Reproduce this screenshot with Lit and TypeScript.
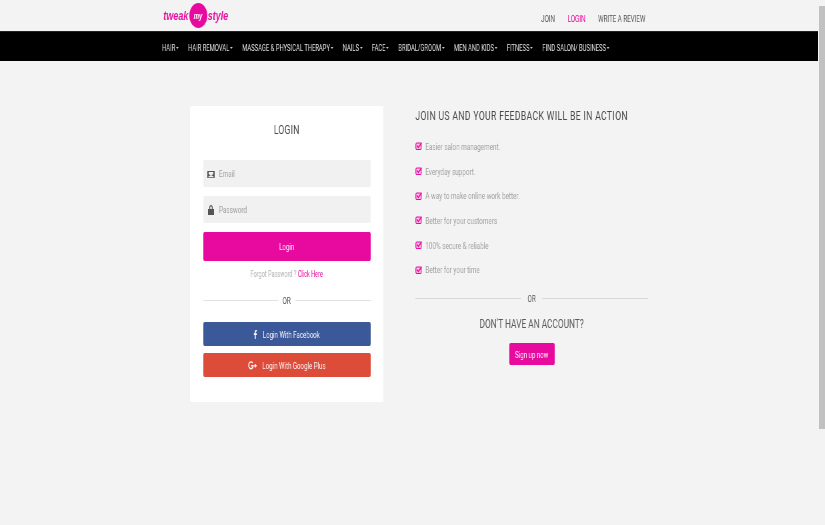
import { LitElement, html, css } from 'lit';
import { customElement } from 'lit/decorators.js';

const NAV = ['HAIR', 'HAIR REMOVAL', 'MASSAGE & PHYSICAL THERAPY', 'NAILS', 'FACE', 'BRIDAL/GROOM', 'MEN AND KIDS', 'FITNESS', 'FIND SALON/ BUSINESS'];
const PERKS = ['Easier salon management.', 'Everyday support.', 'A way to make online work better.', 'Better for your customers', '100% secure & reliable', 'Better for your time'];

// the reference is squeezed horizontally, so .page is laid out 1.5x wide and scaled back
@customElement('app-root')
export class AppRoot extends LitElement {
  static styles = css`
    :host {
      display: flex;
      width: 825px;
      height: 525px;
      overflow: hidden;
      background: #f3f3f3;
      font-family: Roboto, 'Liberation Sans', sans-serif;
      color: #555;
    }
    .frame { width: 818px; flex: none; overflow: hidden; }
    .page { width: 1227px; transform: scaleX(0.6667); transform-origin: 0 0; will-change: transform; background: #f3f3f3; height: 525px; }
    .scrollbar { flex: 1; padding: 6px 0 96px 1px; display: flex; }
    .thumb { flex: 1; background: #c1c1c1; }

    .top { height: 31px; display: flex; align-items: center; padding: 0 259px 0 245px; box-sizing: border-box; justify-content: space-between; }
    .logo { display: flex; align-items: center; gap: 1px; color: #e6109f; font-family: 'Liberation Sans', sans-serif; font-style: italic; font-weight: 700; font-size: 13.500px; height: 26px; }
    .logo .my { width: 27px; height: 25px; border-radius: 50%; background: #e8099f; color: #fff; font-size: 9px; display: flex; align-items: center; justify-content: center; }
    .toplinks { display: flex; gap: 19px; font-size: 9.300px; color: #555; padding-top: 5px; }
    .toplinks .on { color: #e8099f; }

    nav { height: 30px; background: #000; display: flex; align-items: center; padding: 2px 0 0 243px; gap: 14.200px; color: #e4e4e4; font-size: 8.800px; border-top: 1px solid #222; box-sizing: border-box; }
    nav i { display: inline-block; border: 2px solid transparent; border-top-color: #ccc; border-bottom: 0; margin-left: 1px; vertical-align: middle; }

    .body { display: flex; padding: 45px 0 0 285px; gap: 48px; align-items: flex-start; }
    .card { width: 290px; height: 296px; background: #fff; border-radius: 2px; padding: 0 19.500px; box-sizing: border-box; display: flex; flex-direction: column; }
    .card h2 { margin: 17px 0 24px; height: 13px; line-height: 13px; text-align: center; font-size: 13px; font-weight: 400; color: #4a4a4a; letter-spacing: 0.3px; }
    .field { height: 27px; margin-bottom: 9px; background: #f1f1f1; border-radius: 2px; display: flex; align-items: center; gap: 7px; padding-left: 6px; font-size: 9.500px; color: #a0a0a0; }
    .field svg { width: 11px; height: 10px; flex: none; }
    .btn { border-radius: 2px; color: #fbf6f9; display: flex; align-items: center; justify-content: center; font-size: 9.200px; }
    .login { height: 28.500px; background: #e8099f; }
    .forgot { margin-top: 9.500px; height: 9px; line-height: 9px; text-align: center; font-size: 8.300px; color: #b0b0b0; }
    .forgot span { color: #e8099f; }
    .or { display: flex; align-items: center; gap: 7px; font-size: 9.500px; color: #555; height: 10px; }
    .or::before, .or::after { content: ''; flex: 1; border-top: 1px solid #e2e2e2; }
    .card .or { margin-top: 16px; }
    .fb { height: 24px; margin-top: 17px; background: #3b5998; gap: 8px; }
    .gp { height: 24px; margin-top: 7px; background: #dd4b39; gap: 8px; }
    .btn svg { height: 9px; flex: none; }

    .side { width: 349px; }
    .side h1 { margin: 3px 0 0; height: 13px; line-height: 13px; font-size: 13px; font-weight: 400; letter-spacing: 0.5px; color: #4a4a4a; white-space: nowrap; }
    ul { list-style: none; margin: 12px 0 0; padding: 0; }
    li { height: 24.700px; display: flex; align-items: center; gap: 5px; font-size: 9.500px; color: #a0a0a0; }
    li svg { width: 10px; height: 8px; flex: none; }
    .side .or { margin-top: 11px; gap: 9px; }
    .side .or::before, .side .or::after { border-top-color: #d8d8d8; }
    .side h3 { margin: 15px 0 0; height: 12px; line-height: 12px; text-align: center; font-size: 12.500px; font-weight: 400; color: #5a5a5a; }
    .signup { width: 68px; height: 22px; margin: 13px auto 0; background: #e8099f; }
  `;

  render() {
    return html`
      <div class="frame">
        <div class="page">
          <header class="top">
            <div class="logo"><span>tweak</span><span class="my">my</span><span>style</span></div>
            <div class="toplinks"><span>JOIN</span><span class="on">LOGIN</span><span>WRITE A REVIEW</span></div>
          </header>
          <nav>${NAV.map((n) => html`<span>${n}<i></i></span>`)}</nav>
          <main class="body">
            <section class="card">
              <h2>LOGIN</h2>
              <div class="field">
                <svg viewBox="0 0 11 10" preserveAspectRatio="none"><path fill="#555" d="M0 2h11v7H0z"/><path fill="#f1f1f1" d="M2 3h7v2L5.500 6.500 2 5zM1 8l3-1.500h3L10 8v.3H1z"/></svg>
                Email
              </div>
              <div class="field">
                <svg viewBox="0 0 11 10" preserveAspectRatio="none"><path fill="#555" d="M1 4h9v6H1zM3 4V2.500a2.500 2.500 0 0 1 5 0V4H6.700V2.500a1.200 1.200 0 0 0-2.400 0V4z"/></svg>
                Password
              </div>
              <div class="btn login">Login</div>
              <div class="forgot">Forgot Password ? <span>Click Here</span></div>
              <div class="or">OR</div>
              <div class="btn fb">
                <svg viewBox="0 0 5 10" width="6"><path fill="#fff" d="M1.500 10V5.500H0V3.700h1.500V2.300C1.500.800 2.400 0 3.700 0H5v1.700H4c-.6 0-.8.300-.8.800v1.200H5l-.2 1.800H3.200V10z"/></svg>
                Login With Facebook
              </div>
              <div class="btn gp">
                <svg viewBox="0 0 14 10" width="14"><path fill="none" stroke="#fff" stroke-width="1.600" d="M7 2.200A3.800 3.800 0 1 0 8 5.200H4.500M11.500 3.200v4M9.500 5.200h4"/></svg>
                Login With Google Plus
              </div>
            </section>
            <section class="side">
              <h1>JOIN US AND YOUR FEEDBACK WILL BE IN ACTION</h1>
              <ul>
                ${PERKS.map((p) => html`<li>
                  <svg viewBox="0 0 10 8"><rect x=".8" y="1" width="8" height="6.500" rx="1.500" fill="#fbc4e6" stroke="#e8099f" stroke-width="1.200"/><path fill="none" stroke="#e8099f" stroke-width="1.500" d="M2.500 3.500 4.500 5.500 9.500 .8"/></svg>
                  ${p}
                </li>`)}
              </ul>
              <div class="or">OR</div>
              <h3>DON'T HAVE AN ACCOUNT?</h3>
              <div class="btn signup">Sign up now</div>
            </section>
          </main>
        </div>
      </div>
      <div class="scrollbar"><div class="thumb"></div></div>
    `;
  }
}
